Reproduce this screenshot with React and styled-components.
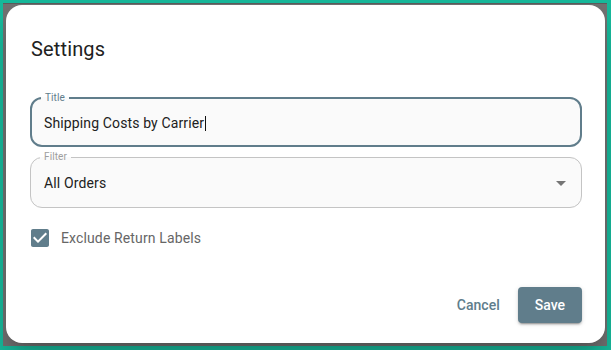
import React from "react";
import styled, { createGlobalStyle } from "styled-components";

const Global = createGlobalStyle`
  html, body { margin: 0; padding: 0; background: #17b99b; }
  body { font-family: Roboto, "Liberation Sans", Arial, sans-serif; }
  * { box-sizing: border-box; }
`;

const Frame = styled.div`
  width: 611px;
  height: 350px;
  background: #17b99b;
  padding: 3px 4px 4px 3px;
  display: flex;
`;

const Backdrop = styled.div`
  flex: 1;
  display: flex;
  background: #717171;
  border-top: 1px solid #5c5c5c;
  padding: 1px 2px 3px 3px;
`;

const Dialog = styled.div`
  flex: 1;
  display: flex;
  flex-direction: column;
  background: #ffffff;
  border-radius: 16px;
  padding: 0 23px 20px 24px;
  box-shadow: 0 11px 15px -7px rgba(0,0,0,0.2), 0 24px 38px 3px rgba(0,0,0,0.14);
`;

const Heading = styled.h2`
  margin: 28px 0 0 1px;
  font-size: 20px;
  line-height: 32px;
  font-weight: 400;
  letter-spacing: 0.0075em;
  color: #212121;
`;

const Field = styled.fieldset`
  margin: ${(p) => p.$top}px 0 0 0;
  padding: 0 ${(p) => (p.$focused ? 12 : 13)}px 0 ${(p) => (p.$focused ? 12 : 13)}px;
  min-width: 0;
  border: ${(p) => (p.$focused ? "2px solid #607d8b" : "1px solid #c4c4c4")};
  border-radius: 12px;
  background: #fafafa;
`;

const Legend = styled.legend`
  margin-left: ${(p) => (p.$focused ? -3 : -4)}px;
  padding: 0 4px;
  font-size: 10px;
  line-height: 10px;
  letter-spacing: 0.01em;
  color: ${(p) => (p.$focused ? "#607d8b" : "#9e9e9e")};
`;

const Value = styled.div`
  display: flex;
  align-items: center;
  height: ${(p) => p.$h}px;
  padding-bottom: ${(p) => p.$pb}px;
  font-size: 14px;
  letter-spacing: 0.00938em;
  color: #212121;
`;

const Grow = styled.span`
  flex: 1;
`;

const Caret = styled.span`
  display: inline-block;
  width: 1px;
  height: 15px;
  margin-left: 1px;
  background: #111;
`;

const Arrow = styled.svg`
  width: 24px;
  height: 24px;
  margin-right: -5px;
  fill: #757575;
`;

const CheckRow = styled.label`
  display: flex;
  align-items: center;
  gap: 9px;
  margin-top: 18px;
  margin-left: -2px;
  font-size: 14px;
  letter-spacing: 0.00938em;
  color: #666666;
`;

const CheckIcon = styled.svg`
  width: 24px;
  height: 24px;
  fill: #607d8b;
`;

const Actions = styled.div`
  margin-top: auto;
  display: flex;
  justify-content: flex-end;
  align-items: center;
  gap: 10px;
`;

const TextButton = styled.button`
  border: 0;
  background: transparent;
  padding: 0 8px;
  height: 36px;
  font-family: inherit;
  font-size: 14px;
  font-weight: 500;
  color: #607d8b;
`;

const SaveButton = styled.button`
  border: 0;
  border-radius: 4px;
  background: #607d8b;
  padding: 0 17px;
  height: 36px;
  font-family: inherit;
  font-size: 14px;
  font-weight: 500;
  color: #ffffff;
  box-shadow: 0 3px 1px -2px rgba(0,0,0,0.2), 0 2px 2px 0 rgba(0,0,0,0.14), 0 1px 5px 0 rgba(0,0,0,0.12);
`;

export default function App() {
  return (
    <>
      <Global />
      <Frame>
        <Backdrop>
          <Dialog>
            <Heading>Settings</Heading>
            <Field $focused $top={28}>
              <Legend $focused>Title</Legend>
              <Value $h={42} $pb={2}>
                Shipping Costs by Carrier
                <Caret />
              </Value>
            </Field>
            <Field $top={5}>
              <Legend>Filter</Legend>
              <Value $h={45} $pb={4}>
                <Grow>All Orders</Grow>
                <Arrow viewBox="0 0 24 24">
                  <path d="M7 10l5 5 5-5z" />
                </Arrow>
              </Value>
            </Field>
            <CheckRow>
              <CheckIcon viewBox="0 0 24 24">
                <path d="M19 3H5c-1.11 0-2 .9-2 2v14c0 1.1.89 2 2 2h14c1.11 0 2-.9 2-2V5c0-1.1-.89-2-2-2zm-9 14l-5-5 1.41-1.41L10 14.17l7.59-7.59L19 8l-9 9z" />
              </CheckIcon>
              Exclude Return Labels
            </CheckRow>
            <Actions>
              <TextButton>Cancel</TextButton>
              <SaveButton>Save</SaveButton>
            </Actions>
          </Dialog>
        </Backdrop>
      </Frame>
    </>
  );
}
